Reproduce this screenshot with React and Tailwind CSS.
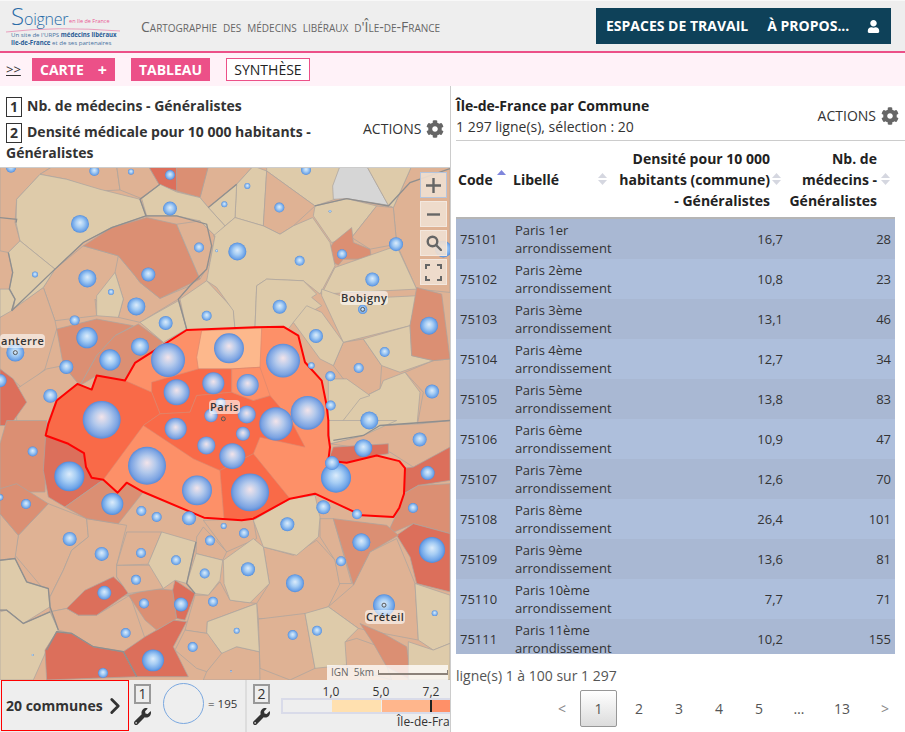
import { ChevronRight } from "lucide-react";
import { FaCog, FaUser, FaWrench } from "react-icons/fa";

const B = "#decbaa";
const L = "#dfb294";
const M = "#db8f73";
const D = "#dc6f5b";

// communes, traced in 3x coordinates of the upper half of the map
const upperAreas = [
  [L, "0,0 160,0 120,25 50,100 45,170 60,225 25,260 0,255"],
  [L, "160,0 350,0 360,72 300,75 200,40 120,25"],
  [L, "350,0 445,0 480,60 425,98 360,72"],
  [L, "625,0 760,0 710,55 625,125 600,95"],
  [L, "1235,0 1350,0 1350,380 1250,370 1190,235 1180,125"],
  [L, "250,240 355,270 355,380 330,450 285,400 290,450 165,465 130,365 165,310"],
  [L, "355,270 405,330 420,350 480,398 570,360 535,400 420,470 355,455 370,400 345,320"],
  [L, "0,455 130,365 165,465 170,490 135,610 70,670 0,610"],
  [L, "140,610 190,600 240,660 170,700 140,780 50,780 50,670"],
  [L, "1030,530 1090,520 1145,600 1140,670 1100,690 1030,640 1000,600"],
  [L, "1215,620 1300,585 1350,580 1350,790 1250,790 1270,680"],
  [D, "445,0 530,0 532,75 480,60"],
  [M, "530,0 625,0 600,95 530,75"],
  [B, "710,55 760,0 800,15 790,180 705,155"],
  [B, "625,125 710,55 705,155 675,180"],
  [B, "800,0 1020,0 1005,100 945,120 800,15"],
  [L, "800,15 945,120 880,180 840,205 790,180"],
  ["#d6d6d6", "1020,0 1100,0 1165,118 1040,98 1000,100 998,60"],
  [B, "1100,0 1235,0 1180,125 1165,118"],
  [B, "945,120 1040,98 1130,120 1055,215 995,230 940,150"],
  [L, "1130,120 1180,125 1190,235 1110,250 1055,215"],
  [M, "1055,185 1060,230 1110,250 1115,280 1030,280 1015,298 972,275 1000,230"],
  [B, "50,100 120,25 200,40 300,70 420,100 438,150 335,185 250,230 165,310 60,225 48,170"],
  [B, "425,98 480,55 530,78 600,95 625,125 675,180 645,210 600,165 530,150 440,150"],
  [M, "440,155 530,175 570,270 600,340 480,398 420,350 405,330 355,270 250,240 335,185"],
  [L, "530,175 600,165 645,210 630,290 600,340 570,270"],
  [B, "345,320 370,400 355,455 290,450 290,390"],
  [B, "25,260 60,225 165,310 130,365 40,430 45,400 28,370 38,320"],
  [B, "0,370 30,370 45,400 35,435 0,455"],
  [M, "170,490 290,460 400,480 345,510 290,570 240,660 190,600"],
  [M, "345,510 415,475 490,530 400,600 375,645 290,630 240,660 290,570"],
  [B, "420,470 535,405 560,490 490,530"],
  [B, "540,400 620,345 700,430 705,490 560,495"],
  [D, "0,610 40,640 80,710 30,780 0,780"],
  [B, "640,210 705,155 790,180 840,205 880,180 938,155 990,230 1005,300 960,385 910,345 800,340 770,360 765,485 705,490 700,435 650,365 620,345 630,290 645,210"],
  [B, "770,360 800,340 910,345 950,385 935,395 965,420 880,470 865,490 765,485"],
  [B, "1005,305 1190,240 1250,370 965,385"],
  [B, "965,370 1050,400 1250,390 1230,480 1030,530 965,390"],
  [B, "920,420 965,440 1030,530 1000,600 960,580 880,470"],
  [B, "1090,520 1230,480 1235,570 1300,585 1200,620 1145,600"],
  [M, "1250,365 1325,385 1350,580 1300,585 1235,570 1230,480"],
  [B, "1100,690 1140,670 1150,645 1215,620 1260,680 1250,790 1010,790 1080,690"],
  [B, "985,640 1040,640 1110,690 1080,700 1010,790 985,790"],
];

// same thing for the lower half
const lowerAreas = [
  [L, "55,345 145,250 260,295 265,350 215,390 190,450 150,530 45,405"],
  [L, "0,280 55,345 45,415 0,420"],
  [L, "260,295 380,315 350,435 350,470 385,525 200,565 150,575 150,530 190,450 215,390 265,350"],
  [L, "610,300 760,295 770,355 680,395"],
  [L, "790,380 880,405 950,360 1005,420 1020,490 985,560 860,600 775,595 770,550 808,490"],
  [L, "960,295 1000,295 1055,490 1018,490 1005,420 960,350"],
  [L, "1190,355 1245,490 1255,660 1150,640 1075,625 985,560 1060,495 1110,395"],
  [L, "775,597 915,580 945,745 870,780 780,745"],
  [L, "585,525 625,525 660,485 690,540 770,550 622,605 620,640 555,630"],
  [L, "660,700 710,680 778,695 780,780 610,780 620,755"],
  [L, "150,575 200,565 235,585 290,585 390,525 435,655 370,695 280,680 215,640 175,630"],
  [L, "990,70 1090,45 1140,15 1260,10 1350,0 1350,90 1240,140 1170,95"],
  [B, "985,0 1190,0 1090,45 990,70"],
  [D, "1000,80 1165,70 1165,100 1130,105 1040,127 985,120"],
  [D, "1215,143 1240,140 1350,80 1350,180 1255,195 1212,220"],
  [M, "1255,195 1350,190 1350,340 1240,310 1160,345 1198,262 1212,220"],
  [D, "1240,310 1350,340 1350,515 1250,490 1230,410 1190,345"],
  [M, "20,0 140,0 135,215 40,215 0,205 0,70"],
  [D, "137,45 205,70 252,98 258,140 275,172 310,178 195,260 145,230 130,150"],
  [M, "310,178 353,217 380,187 430,215 355,310 260,295 195,260"],
  [M, "0,205 50,190 145,250 55,345 0,280"],
  [B, "0,420 45,415 80,485 145,505 150,560 70,610 20,570 0,570"],
  [B, "0,575 20,570 70,610 150,575 175,630 140,690 100,780 0,780"],
  [D, "170,635 215,640 280,680 370,695 410,770 140,780 135,690"],
  [D, "370,695 435,650 470,630 520,600 560,605 520,680 565,770 410,770"],
  [M, "385,525 455,505 520,510 530,595 470,630 435,600"],
  [D, "525,480 585,520 555,600 530,595 518,510"],
  [D, "200,565 255,510 340,470 390,515 290,585 235,585"],
  [L, "350,435 455,435 490,505 385,520 350,470"],
  [L, "380,335 485,335 445,432 350,435"],
  [B, "445,430 485,335 588,365 560,490 525,480 490,505"],
  [L, "590,350 610,320 680,395 668,420 588,400"],
  [B, "560,490 588,400 668,420 660,480 625,525 585,520"],
  [B, "670,420 760,355 790,380 808,490 750,548 690,540 672,490"],
  [B, "760,300 870,235 945,225 960,290 955,350 890,405 790,380"],
  [M, "1000,295 1160,315 1195,345 1110,395 1060,495"],
  [B, "1245,490 1350,525 1350,670 1300,690 1255,660"],
  [B, "915,580 985,560 1075,625 1040,660 1040,735 945,745"],
  [L, "1035,665 1070,655 1140,680 1175,780 1040,740"],
  [M, "1080,610 1150,640 1220,680 1235,780 1160,740 1120,670"],
  [B, "622,605 770,550 778,695 710,680 665,700 620,640"],
  [B, "1225,665 1300,690 1350,670 1350,780 1225,780"],
  [L, "555,630 622,640 665,700 620,755 590,745 525,690"],
];

const outerLines = [
  "35,435 165,310 250,230 335,185 438,150 420,100 480,55",
  "438,150 530,150 620,175 635,240 620,310 570,360 535,400 560,490",
  "625,125 710,55",
  "945,120 1040,98 1165,120 1230,50 1350,8",
  "0,155 50,160 48,170",
  "25,260 38,320 28,370 45,400 35,435",
];

const lowerLines = [
  "0,420 45,415 80,485 145,505 150,560 175,630",
  "0,570 20,570 70,610 150,575",
  "140,690 170,635 215,640 280,680 370,695 410,770",
  "588,365 560,490 585,520",
  "1000,60 1090,45 1140,15 1350,0",
];

const selectedOutline =
  "560,493 765,485 850,483 895,510 915,590 965,645 980,720 985,765 985,810 990,845 985,885 1040,892 1130,870 1198,887 1215,908 1212,985 1198,1027 1180,1055 1085,1050 945,985 870,1000 760,1060 725,1065 612,1057 430,980 380,952 353,982 310,943 275,937 258,905 252,863 205,835 137,810 145,775 170,705 232,655 275,672 290,630 375,645 405,592";

const selectedAreas = [
  ["#fdb88c", "605,495 785,487 780,605 695,610 595,610 590,575"],
  ["#f96a48", "455,650 595,610 695,610 695,680 590,690 570,740 480,745 455,680"],
  ["#f96a48", "232,655 275,672 290,630 375,645 455,680 480,745 430,780 310,943 275,937 258,905 252,863 205,835 137,810 145,775 170,705"],
  ["#f96a48", "430,780 480,745 570,740 590,690 695,680 760,705 810,690 870,760 915,845 780,815 760,865 660,915 580,880"],
  ["#f96a48", "660,915 760,865 870,1000 760,1060 725,1065 672,1060"],
  ["#fd9068", "695,610 780,605 810,690 760,705 695,680"],
];

const upperBubbles = [
  [33, 5, 15], [283, 15, 15], [393, 17, 9], [510, 27, 15], [918, 12, 15], [742, 60, 9], [510, 128, 21],
  [673, 115, 9], [838, 125, 15], [990, 136, 4], [240, 174, 27], [597, 245, 15], [650, 255, 4], [712, 257, 27],
  [1188, 235, 21], [1330, 250, 25], [1026, 265, 15], [899, 285, 15], [105, 326, 9], [445, 326, 21], [262, 338, 27],
  [1117, 341, 21], [333, 379, 9], [409, 422, 27], [1088, 431, 14], [839, 423, 21], [620, 450, 15], [224, 464, 15],
  [497, 472, 21], [1287, 480, 27], [948, 511, 21], [261, 516, 32], [46, 561, 27], [420, 543, 27], [1154, 559, 15],
  [330, 583, 32], [199, 604, 21], [934, 600, 10], [1076, 607, 15], [991, 632, 15], [0, 645, 20], [151, 691, 21],
  [1296, 678, 21], [992, 720, 15], [1108, 765, 27],
];

const selectedBubbles = [
  [687, 548, 45], [504, 583, 51], [849, 585, 51], [640, 653, 33], [743, 658, 33], [530, 680, 39], [662, 712, 15],
  [633, 750, 20], [740, 747, 27], [305, 763, 57], [828, 775, 50], [923, 742, 51], [527, 790, 33],
  [729, 805, 21], [619, 840, 27], [697, 872, 39], [441, 901, 57], [591, 975, 45], [750, 981, 57],
];

const lowerBubbles = [
  [98, 93, 15], [208, 168, 45], [1090, 83, 27], [1259, 57, 21], [1283, 158, 21], [1008, 172, 45], [996, 128, 21],
  [78, 251, 15], [337, 251, 33], [424, 272, 15], [470, 290, 15], [567, 294, 21], [970, 261, 21], [1071, 282, 15],
  [1239, 263, 15], [862, 312, 21], [671, 317, 9], [732, 339, 15], [630, 361, 15], [1084, 366, 27], [209, 356, 21],
  [1296, 389, 39], [305, 401, 21], [423, 398, 15], [528, 420, 15], [1023, 423, 15], [614, 460, 15], [744, 447, 21],
  [408, 479, 15], [885, 489, 27], [313, 518, 21], [543, 553, 21], [432, 550, 15], [639, 545, 15], [1152, 555, 33],
  [1304, 579, 9], [710, 632, 9], [951, 632, 15], [377, 639, 15], [878, 645, 15], [578, 681, 15], [459, 721, 33],
  [98, 705, 3], [309, 759, 15], [693, 754, 3], [0, 231, 10],
];

const rows = [
  ["75101", "Paris 1er arrondissement", "16,7", "28"],
  ["75102", "Paris 2ème arrondissement", "10,8", "23"],
  ["75103", "Paris 3ème arrondissement", "13,1", "46"],
  ["75104", "Paris 4ème arrondissement", "12,7", "34"],
  ["75105", "Paris 5ème arrondissement", "13,8", "83"],
  ["75106", "Paris 6ème arrondissement", "10,9", "47"],
  ["75107", "Paris 7ème arrondissement", "12,6", "70"],
  ["75108", "Paris 8ème arrondissement", "26,4", "101"],
  ["75109", "Paris 9ème arrondissement", "13,6", "81"],
  ["75110", "Paris 10ème arrondissement", "7,7", "71"],
  ["75111", "Paris 11ème arrondissement", "10,2", "155"],
];

const Areas = ({ list }) =>
  list.map(([fill, points], i) => (
    <polygon key={i} points={points} fill={fill} stroke="#aba59f" strokeWidth="2.2" strokeLinejoin="round" />
  ));

const Lines = ({ list }) =>
  list.map((points, i) => <polyline key={i} points={points} fill="none" stroke="#8f8f8f" strokeWidth="4" />);

const Bubbles = ({ list, fill }) =>
  list.map(([cx, cy, r], i) => <circle key={i} cx={cx} cy={cy} r={r} fill={fill} />);

const Gradient = ({ id, stops }) => (
  <radialGradient id={id} cx="50%" cy="50%" r="50%" fx="50%" fy="42%">
    {stops.map(([offset, color]) => (
      <stop key={offset} offset={offset} stopColor={color} />
    ))}
  </radialGradient>
);

const MapDrawing = () => (
  <svg viewBox="0 0 1350 1539" className="block h-full w-full" preserveAspectRatio="none">
    <defs>
      <Gradient id="bubble" stops={[["0%", "#dcecfb"], ["45%", "#a6cdf4"], ["85%", "#6ea4e8"], ["100%", "#4f8cdd"]]} />
      <Gradient id="bubbleSelected" stops={[["0%", "#f3e4ea"], ["45%", "#b3c9ec"], ["85%", "#7ba3e2"], ["100%", "#5a8bd8"]]} />
    </defs>
    <rect width="1350" height="1539" fill={L} />
    <g transform="translate(0,-6)">
      <Areas list={upperAreas} />
      <g transform="translate(0,765)">
        <Areas list={lowerAreas} />
        <Lines list={lowerLines} />
      </g>
      <Lines list={outerLines} />
      <polygon points={selectedOutline} fill="#fd9068" />
      {selectedAreas.map(([fill, points], i) => (
        <polygon key={i} points={points} fill={fill} stroke="#d98870" strokeWidth="2" />
      ))}
      <polygon points={selectedOutline} fill="none" stroke="#ff0000" strokeWidth="6" strokeLinejoin="round" />
      <Bubbles list={upperBubbles} fill="url(#bubble)" />
      <Bubbles list={selectedBubbles} fill="url(#bubbleSelected)" />
      <g transform="translate(0,765)">
        <Bubbles list={lowerBubbles} fill="url(#bubble)" />
      </g>
      <g fill="none" stroke="#555" strokeWidth="3">
        <circle cx="1088" cy="431" r="6" />
        <circle cx="46" cy="561" r="6" />
        <circle cx="670" cy="760" r="6" />
        <circle cx="1152" cy="1320" r="6" />
      </g>
    </g>
  </svg>
);

const MapButton = ({ children, focused }) => (
  <div className={`flex h-[26px] w-[27px] items-center justify-center border bg-[#f0dfd0]/90 ${focused ? "border-[#b5c4dc]" : "border-[#f3e8df]"}`}>
    {children}
  </div>
);

const MapLabel = ({ className, children }) => (
  <span className={`absolute rounded-sm bg-white/60 px-[1px] text-[11px] leading-[14px] font-semibold tracking-[0.5px] text-[#333] ${className}`}>
    {children}
  </span>
);

const SortCarets = ({ active }) => (
  <svg width="9" height="14" viewBox="0 0 9 14" className="shrink-0">
    <polygon points="4.5,1 9,6 0,6" fill={active ? "#7f86dc" : "#d5d7e0"} />
    {!active && <polygon points="0,8 9,8 4.5,13" fill="#d5d7e0" />}
  </svg>
);

const ActionsButton = () => (
  <div className="flex shrink-0 items-center gap-[5px] text-sm whitespace-nowrap text-[#333]">
    ACTIONS
    <FaCog className="text-[18px] text-[#666]" />
  </div>
);

const NumberBox = ({ n }) => (
  <span className="-my-[2px] mr-[5px] inline-flex h-[20px] w-[16px] items-center justify-center border border-[#333] align-middle text-sm leading-none">
    {n}
  </span>
);

const LegendBox = ({ n }) => (
  <span className="flex h-[20px] w-[17px] items-center justify-center border-2 border-[#999] text-sm leading-none text-[#333]">
    {n}
  </span>
);

const Header = () => (
  <header className="flex h-[53px] shrink-0 items-center border-t border-t-[#f8f8f8] border-b-2 border-b-[#ec5088] bg-[#eeeeee]">
    <div className="mt-[2px] ml-[6px] flex w-[125px] shrink-0 flex-col self-start">
      <div className="flex h-[25px] items-end pl-[5px] leading-none text-[#2a6ca8]">
        <span className="text-[24px] font-light">S</span>
        <span className="mb-[1px] text-[16px] font-light tracking-[-0.3px]">oigner</span>
        <span className="mb-[4px] ml-[1px] text-[5.5px] whitespace-nowrap text-[#e95a94]">en Ile de France</span>
      </div>
      <svg width="116" height="5" viewBox="0 0 116 5" className="-mb-[2px] block">
        <path d="M0 4 Q50 -2 114 3" fill="none" stroke="#e98ab0" strokeWidth="0.8" />
      </svg>
      <div className="pl-[5px] text-[6.1px] leading-[8px] whitespace-nowrap text-[#47719f]">
        Un site de l'URPS <b className="text-[#2a5d96]">médecins libéraux</b>
        <br />
        <b className="text-[#2a5d96]">Ile-de-France</b> et de ses partenaires
      </div>
    </div>
    <div className="ml-[10px] text-[14px] whitespace-nowrap text-[#666] [font-variant:small-caps] [word-spacing:2.3px]">
      Cartographie des médecins libéraux d'Île-de-France
    </div>
    <nav className="ml-auto mr-[14px] flex h-[36px] w-[295px] shrink-0 items-center bg-[#0e4159] pl-[10px] text-sm font-bold whitespace-nowrap text-white">
      <span>ESPACES DE TRAVAIL</span>
      <span className="ml-[19px]">À PROPOS...</span>
      <FaUser className="ml-[18px] text-[13px]" />
    </nav>
  </header>
);

const TabBar = () => (
  <div className="flex h-[33px] shrink-0 items-center bg-[#fff2f8] pl-[6px] text-sm">
    <span className="w-[26px] text-[13px] text-[#333] underline">&gt;&gt;</span>
    <div className="flex h-[23px] w-[83px] items-center justify-between bg-[#ec5088] px-[8px] font-bold text-white">
      <span>CARTE</span>
      <span className="text-base leading-none">+</span>
    </div>
    <div className="ml-[16px] flex h-[23px] w-[79px] items-center justify-center bg-[#ec5088] font-bold text-white">
      TABLEAU
    </div>
    <div className="ml-[16px] flex h-[23px] w-[84px] items-center justify-center border border-[#ec5088] bg-white text-[#222]">
      SYNTHÈSE
    </div>
  </div>
);

const MapPanel = () => (
  <section className="flex w-[451px] shrink-0 flex-col border-r border-r-[#cccccc]">
    <div className="flex h-[81px] shrink-0 items-center pt-[4px] pl-[6px]">
      <div className="w-[357px] shrink-0 text-sm leading-[21px] font-bold text-[#333]">
        <div className="mb-[5px]">
          <NumberBox n="1" />
          Nb. de médecins - Généralistes
        </div>
        <div>
          <NumberBox n="2" />
          Densité médicale pour 10 000 habitants - Généralistes
        </div>
      </div>
      <ActionsButton />
    </div>
    <div className="relative h-[513px] shrink-0 overflow-hidden border-t border-t-[#cccccc]">
      <MapDrawing />
      <div className="absolute top-[4px] left-[420px] flex flex-col gap-[3px]">
        <MapButton focused>
          <svg width="15" height="15" viewBox="0 0 15 15" stroke="#666" strokeWidth="2.4">
            <path d="M0 7.5 H15 M7.5 0 V15" />
          </svg>
        </MapButton>
        <MapButton>
          <svg width="15" height="15" viewBox="0 0 15 15" stroke="#666" strokeWidth="2.4">
            <path d="M1 7.5 H14" />
          </svg>
        </MapButton>
        <MapButton>
          <svg width="16" height="16" viewBox="0 0 16 16" fill="none" stroke="#666" strokeWidth="2.4">
            <circle cx="6.5" cy="6.5" r="4.8" />
            <path d="M10 10 L15 15" strokeLinecap="round" />
          </svg>
        </MapButton>
        <MapButton>
          <svg width="17" height="17" viewBox="0 0 17 17" fill="none" stroke="#666" strokeWidth="2">
            <path d="M1 5 V1 H5 M12 1 H16 V5 M16 12 V16 H12 M5 16 H1 V12" />
          </svg>
        </MapButton>
      </div>
      <MapLabel className="top-[123px] left-[340px]">Bobigny</MapLabel>
      <MapLabel className="top-[166px] left-0">anterre</MapLabel>
      <MapLabel className="top-[232px] left-[209px]">Paris</MapLabel>
      <MapLabel className="top-[442px] left-[365px]">Créteil</MapLabel>
      <div className="absolute top-[497px] left-[327px] flex h-[15px] w-[121px] items-center bg-white/75 pl-[4px] text-[10px] whitespace-nowrap text-[#666]">
        IGN&nbsp;&nbsp;5km
        <span className="ml-[4px] h-[5px] w-[70px] shrink-0 border-x border-b-2 border-x-[#8c8279] border-b-[#8c8279]" />
      </div>
    </div>
    <LegendBar />
  </section>
);

const LegendBar = () => (
  <div className="flex h-[52px] shrink-0 bg-[#eeeeee] text-xs text-[#333]">
    <div className="ml-[1px] flex h-[51px] w-[128px] shrink-0 items-center border border-[#ff0000] pl-[4px] text-sm font-bold whitespace-nowrap">
      20 communes
      <ChevronRight size={26} strokeWidth={2.6} className="-ml-[1px]" />
    </div>
    <div className="flex w-[118px] shrink-0 border-r-2 border-r-[#dddddd] pl-[5px]">
      <div className="flex flex-col gap-[4px] pt-[4px]">
        <LegendBox n="1" />
        <FaWrench className="text-[17px]" />
      </div>
      <div className="mt-[3px] ml-[12px] h-[41px] w-[41px] rounded-full border border-[#7aa8e0]" />
      <span className="mt-[16px] ml-[4px] text-[11.5px] whitespace-nowrap">= 195</span>
    </div>
    <div className="flex min-w-0 flex-1 pl-[6px]">
      <div className="flex flex-col gap-[4px] pt-[4px]">
        <LegendBox n="2" />
        <FaWrench className="text-[17px]" />
      </div>
      <div className="ml-[11px] min-w-0 flex-1 overflow-hidden">
        <div className="ml-[25px] flex h-[18px] items-end leading-none">
          <span className="w-[50px] shrink-0 text-center">1,0</span>
          <span className="w-[50px] shrink-0 text-center">5,0</span>
          <span className="w-[50px] shrink-0 text-center">7,2</span>
        </div>
        <div className="flex h-[16px] border-2 border-r-0 border-[#d9dbe9]">
          <span className="w-[48px] bg-[#eeeeee]" />
          <span className="w-[50px] border-l border-l-[#eee] bg-[#ffe0af]" />
          <span className="w-[49px] border-l border-l-[#eee] bg-[#ffb68c]" />
          <span className="w-[2px] bg-[#222]" />
          <span className="flex-1 bg-[#ff9068]" />
        </div>
        <div className="ml-[116px] leading-[16px] whitespace-nowrap">Île-de-France</div>
      </div>
    </div>
  </div>
);

const TablePanel = () => (
  <section className="flex min-w-0 flex-1 flex-col pl-[5px]">
    <div className="flex h-[55px] shrink-0 items-center justify-between border-b border-b-[#cccccc] pt-[6px] pr-[6px]">
      <div className="text-sm leading-[21px] text-[#333]">
        <div className="font-bold text-[#222]">Île-de-France par Commune</div>
        <div>1 297 ligne(s), sélection : 20</div>
      </div>
      <ActionsButton />
    </div>
    <div className="w-[439px]">
      <div className="flex h-[78px] items-center border-b-2 border-b-[#b5b5b5] text-sm leading-[21px] font-bold text-[#222]">
        <div className="flex w-[55px] items-center gap-[4px] pl-[2px]">
          Code
          <span className="-mt-[6px]">
            <SortCarets active />
          </span>
        </div>
        <div className="flex w-[96px] items-center justify-between pl-[2px]">
          Libellé
          <SortCarets />
        </div>
        <div className="flex w-[174px] items-center justify-end gap-[2px]">
          <div className="text-right">
            Densité pour 10 000
            <br />
            habitants (commune)
            <br />- Généralistes
          </div>
          <SortCarets />
        </div>
        <div className="flex w-[109px] items-center justify-end gap-[4px]">
          <div className="text-right">
            Nb. de
            <br />
            médecins -
            <br />
            Généralistes
          </div>
          <SortCarets />
        </div>
      </div>
      <div className="h-[435px] overflow-hidden text-[13px] leading-[18px] text-[#333]">
        {rows.map(([code, name, density, count], i) => (
          <div key={code} className={`flex h-[40px] items-center pb-[1px] ${i % 2 === 0 ? "bg-[#a9b8d3]" : "bg-[#aebfdc]"}`}>
            <div className="w-[55px] pl-[4px]">{code}</div>
            <div className="w-[110px] pl-[4px]">{name}</div>
            <div className="w-[162px] text-right">{density}</div>
            <div className="flex-1 pr-[4px] text-right">{count}</div>
          </div>
        ))}
      </div>
    </div>
    <div className="mt-[12px] text-sm leading-[20px] text-[#555]">ligne(s) 1 à 100 sur 1 297</div>
    <div className="mt-[4px] flex h-[37px] items-center text-sm text-[#555]">
      <span className="ml-[102px] w-[22px] text-[#888]">&lt;</span>
      <span className="flex h-[37px] w-[37px] items-center justify-center rounded-[2px] border border-[#979797] bg-gradient-to-b from-white to-[#dcdcdc]">
        1
      </span>
      <span className="ml-[2px] w-[40px] text-center">2</span>
      <span className="w-[40px] text-center">3</span>
      <span className="w-[40px] text-center">4</span>
      <span className="w-[40px] text-center">5</span>
      <span className="w-[40px] text-center">…</span>
      <span className="ml-[3px] w-[40px] text-center">13</span>
      <span className="ml-[4px] w-[38px] text-center text-[#888]">&gt;</span>
    </div>
  </section>
);

const App = () => (
  <div className="flex h-[732px] w-[905px] flex-col overflow-hidden bg-white font-['Open_Sans',sans-serif]">
    <Header />
    <TabBar />
    <div className="flex min-h-0 flex-1">
      <MapPanel />
      <TablePanel />
    </div>
  </div>
);

export default App;
